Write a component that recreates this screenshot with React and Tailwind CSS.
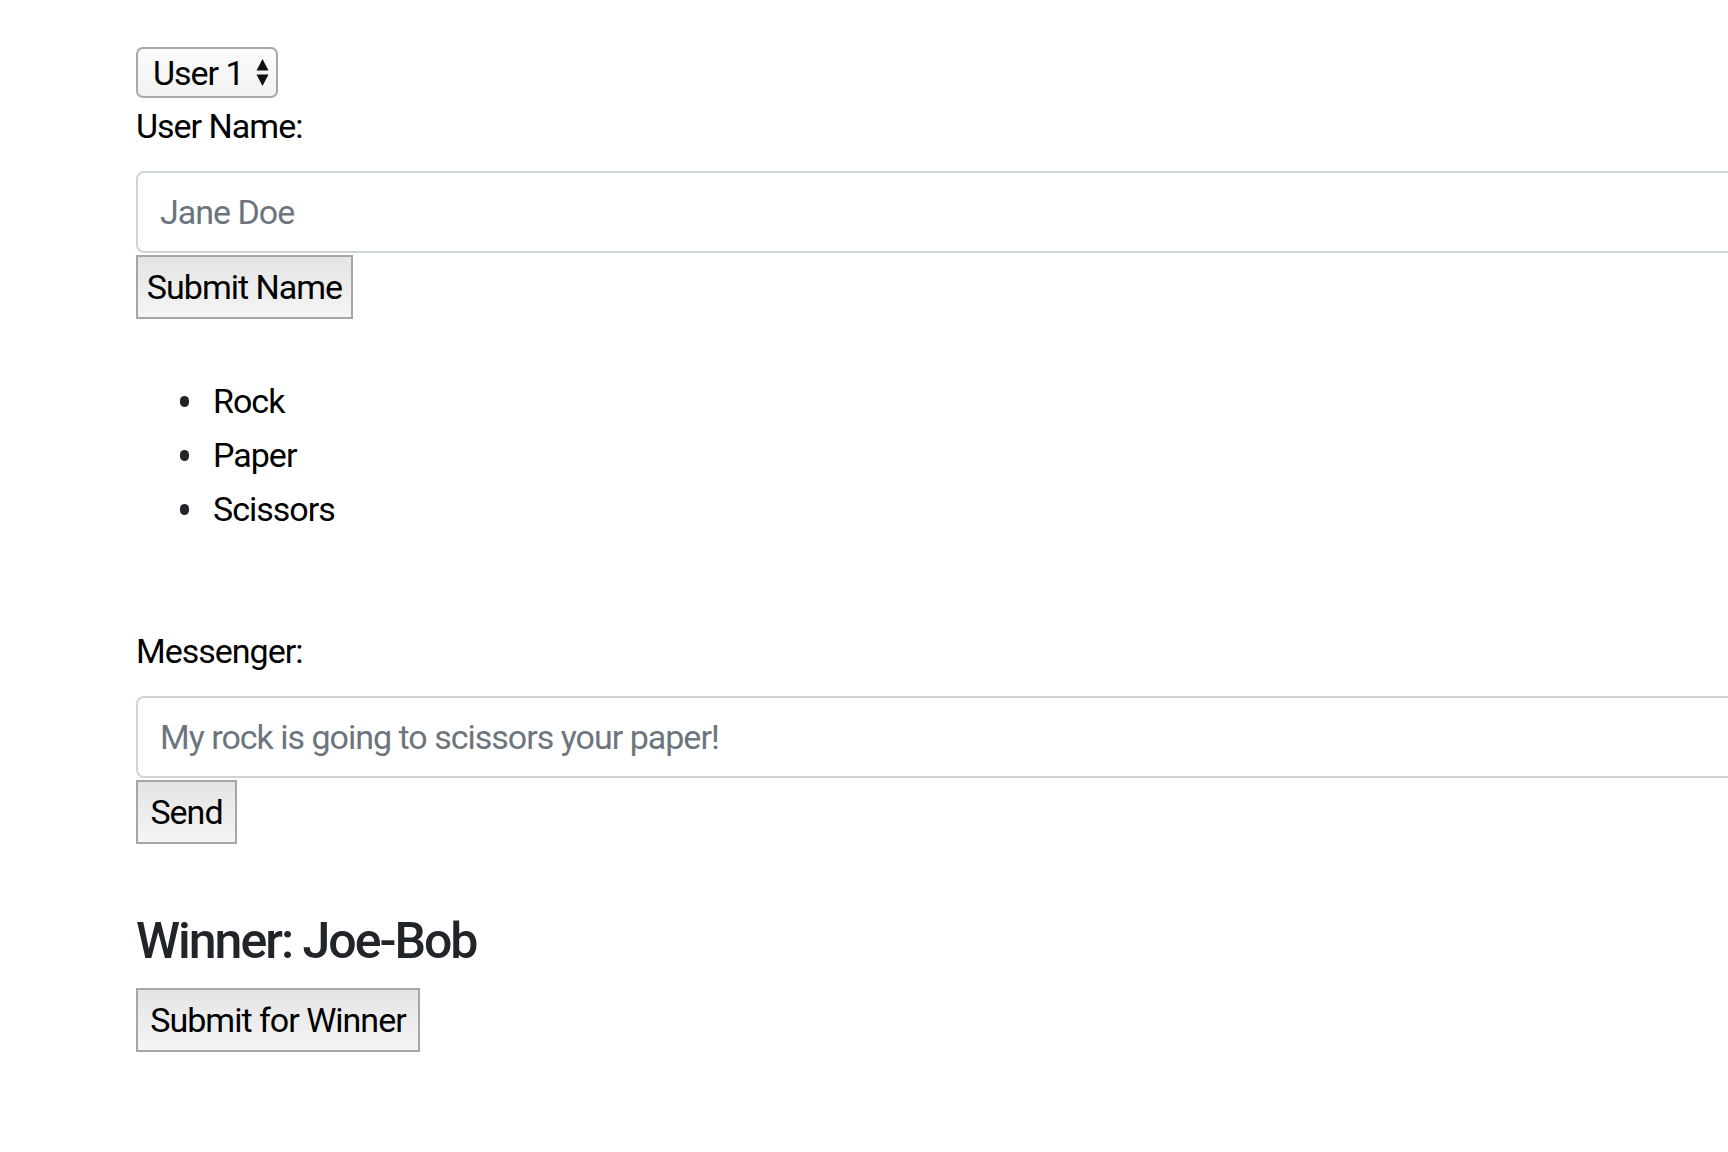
export default function App() {
  const font = { fontFamily: 'Roboto, "Liberation Sans", Arial, sans-serif' };
  const btn =
    "h-[64px] border-2 border-[#a6a6a6] bg-gradient-to-b from-[#e4e4e4] to-[#f5f5f5] text-[34px] tracking-[-1px] text-black leading-none flex items-center justify-center whitespace-nowrap";
  const label = "h-[51px] leading-[51px] text-[34px] tracking-[-1px] text-black whitespace-nowrap";
  const input =
    "mt-[19px] h-[82px] w-[1700px] rounded-[8px] border-2 border-[#ced4da] bg-white flex items-center pl-[22px] text-[34px] tracking-[-1px] text-[#6c757d] whitespace-nowrap";
  return (
    <div className="min-h-[1152px] w-[1728px] overflow-hidden bg-white pl-[136px] pt-[47px] text-[#212529]" style={font}>
      <div className="h-[51px] w-[142px] rounded-[7px] border-2 border-[#a8a8a8] bg-gradient-to-b from-[#fbfbfb] to-[#f2f2f2] flex items-center pl-[15px] gap-[12px] text-[34px] tracking-[-1px] text-black leading-none whitespace-nowrap">
        <span>User 1</span>
        <svg width="13" height="29" viewBox="0 0 13 29" className="shrink-0">
          <polygon points="6.5,1 12.5,12.5 0.5,12.5" fill="#111" />
          <polygon points="0.5,16.5 12.5,16.5 6.5,28" fill="#111" />
        </svg>
      </div>
      <div className={`${label} mt-[3px]`}>User Name:</div>
      <div className={input}>Jane Doe</div>
      <button className={`${btn} mt-[2px] w-[217px]`}>Submit Name</button>

      <ul className="mt-[55px]">
        {["Rock", "Paper", "Scissors"].map((t) => (
          <li key={t} className="h-[54px] flex items-center text-[34px] tracking-[-1px] text-black">
            <span className="ml-[44px] mr-[24px] h-[11px] w-[9px] rounded-full bg-[#212529]" />
            <span>{t}</span>
          </li>
        ))}
      </ul>

      <div className={`${label} mt-[90px]`}>Messenger:</div>
      <div className={input}>My rock is going to scissors your paper!</div>
      <button className={`${btn} mt-[2px] w-[101px]`}>Send</button>

      <h4 className="mt-[66px] h-[62px] leading-[62px] text-[50px] font-medium tracking-[-2px] text-[#212529] whitespace-nowrap">Winner: Joe-Bob</h4>
      <button className={`${btn} mt-[16px] w-[284px]`}>Submit for Winner</button>
    </div>
  );
}
